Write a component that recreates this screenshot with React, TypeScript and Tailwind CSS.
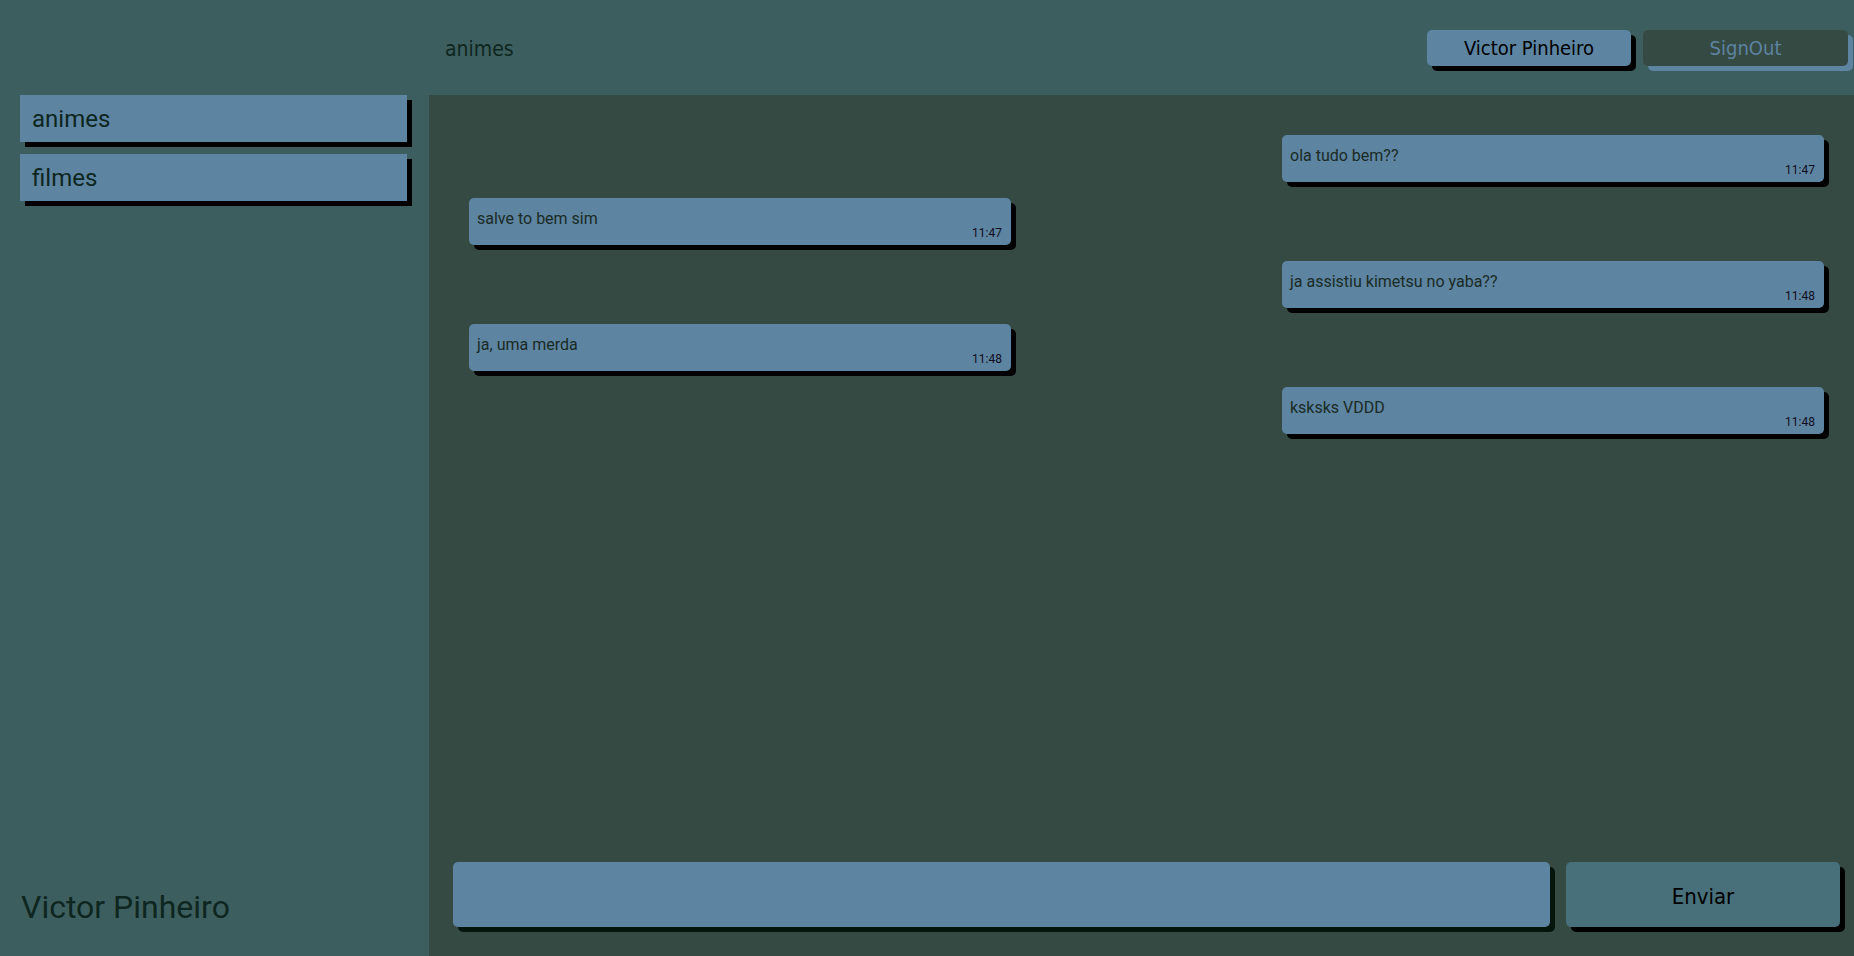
import { useState } from "react";

type Message = {
  id: number;
  text: string;
  time: string;
  mine: boolean;
};

const messages: Message[] = [
  { id: 1, text: "ola tudo bem??", time: "11:47", mine: true },
  { id: 2, text: "salve to bem sim", time: "11:47", mine: false },
  { id: 3, text: "ja assistiu kimetsu no yaba??", time: "11:48", mine: true },
  { id: 4, text: "ja, uma merda", time: "11:48", mine: false },
  { id: 5, text: "ksksks VDDD", time: "11:48", mine: true },
];

const rooms = ["animes", "filmes"];

// oswald-ish condensed face
const narrow = "font-['DejaVu_Sans_Condensed','DejaVu_Sans',sans-serif] font-stretch-condensed";

export default function App() {
  const [texto, setTexto] = useState("");

  return (
    <div className="h-screen w-full overflow-hidden bg-[#3d5e5f] font-['Roboto',sans-serif] grid grid-cols-[429px_1fr] grid-rows-[95px_1fr]">

      {/* header */}
      <div />
      <header className="flex items-center justify-between pl-4 pr-[6px]">
        <h1 className={`${narrow} text-[21px] text-[#0d2620] pt-1`}>animes</h1>

        <div className="flex gap-3">
          <button className={`${narrow} w-[204px] h-9 rounded-[5px] bg-[#5d84a0] text-[20px] text-black shadow-[5px_5px_0_#000]`}>
            Victor Pinheiro
          </button>
          <button className={`${narrow} w-[205px] h-9 rounded-[5px] bg-[#364a44] text-[20px] text-[#5d84a0] shadow-[5px_5px_0_#5d84a0]`}>
            SignOut
          </button>
        </div>
      </header>

      {/* sidebar */}
      <aside className="flex flex-col justify-between pl-5 pr-[22px] pb-[25px]">
        <div className="flex flex-col gap-3">
          {rooms.map((room) => (
            <div
              key={room}
              className="h-[47px] bg-[#5d84a0] pl-3 flex items-center text-[24px] text-[#0d2620] shadow-[5px_5px_0_#000] cursor-pointer"
            >
              {room}
            </div>
          ))}
        </div>

        <p className="text-[32px] text-[#0d2620] pl-px">Victor Pinheiro</p>
      </aside>

      {/* chat */}
      <main className="bg-[#364a44] flex flex-col min-h-0">
        <div className="flex-1 flex flex-col gap-4 pt-10 pl-10 pr-[30px]">
          {messages.map((m) => (
            <div
              key={m.id}
              className={`w-[542px] h-[47px] rounded-[5px] bg-[#5d84a0] shadow-[5px_5px_0_#000] flex flex-col px-2 pt-[11px] ${m.mine ? "self-end" : "self-start"}`}
            >
              <span className="text-[16px] leading-[19px] text-[#1a2b26]">{m.text}</span>
              <span className="self-end text-[12px] leading-[14px] text-[#120d1e] -mt-[2px] pr-px">{m.time}</span>
            </div>
          ))}
        </div>

        <form
          className="flex gap-4 pl-6 pr-[14px] pb-[29px]"
          onSubmit={(e) => {
            e.preventDefault();
            setTexto("");
          }}
        >
          <input
            value={texto}
            onChange={(e) => setTexto(e.target.value)}
            className="flex-1 h-[65px] rounded-[5px] bg-[#5d84a0] shadow-[5px_5px_0_#04150e] outline-none px-4 text-[18px]"
          />
          <button
            type="submit"
            className={`${narrow} w-[274px] h-[65px] rounded-[5px] bg-[#47707b] text-[22px] text-black shadow-[5px_5px_0_#000] pt-1`}
          >
            Enviar
          </button>
        </form>
      </main>

    </div>
  );
}
